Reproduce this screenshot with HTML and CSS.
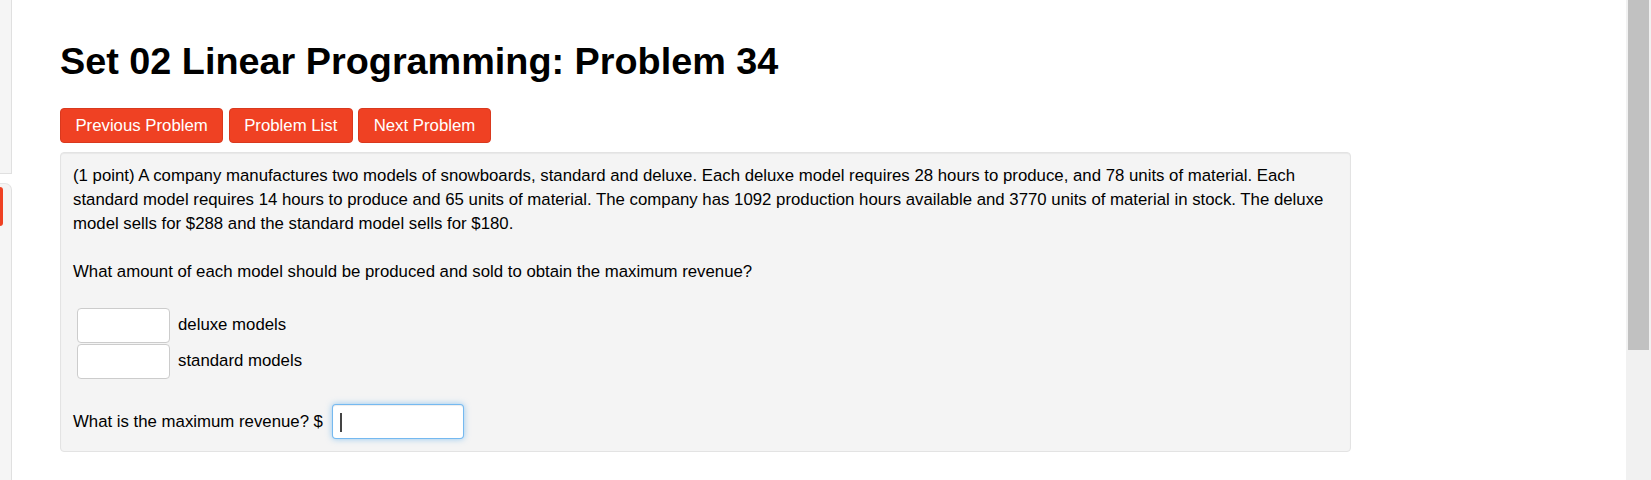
FILE: index.html
```html
<!DOCTYPE html>
<html lang="en">
<head>
    <meta charset="UTF-8">
    <meta name="viewport" content="width=device-width, initial-scale=1.0">
    <title>Set 02 Linear Programming: Problem 34</title>
    <link rel="stylesheet" href="styles.css">
</head>
<body>

    <div class="sidebar">
        <div class="side-panel"></div>
        <div class="side-panel lower">
            <span class="side-btn"></span>
        </div>
    </div>

    <div class="main">
        <h2 class="problem-title">Set 02 Linear Programming: Problem 34</h2>

        <div class="nav-buttons">
            <button class="nav-btn">Previous Problem</button>
            <button class="nav-btn">Problem List</button>
            <button class="nav-btn">Next Problem</button>
        </div>

        <div class="problem-box">
            <p class="statement">(1 point) A company manufactures two models of snowboards, standard and deluxe. Each deluxe model requires 28 hours to produce, and 78 units of material. Each standard model requires 14 hours to produce and 65 units of material. The company has 1092 production hours available and 3770 units of material in stock. The deluxe model sells for $288 and the standard model sells for $180.</p>

            <p class="question">What amount of each model should be produced and sold to obtain the maximum revenue?</p>

            <div class="answers">
                <div class="answer-row">
                    <input type="text" class="answer-input">
                    <span class="answer-label">deluxe models</span>
                </div>
                <div class="answer-row">
                    <input type="text" class="answer-input">
                    <span class="answer-label">standard models</span>
                </div>
            </div>

            <div class="revenue-row">
                <span>What is the maximum revenue? $</span>
                <span class="revenue-field">
                    <input type="text" class="answer-input revenue-input">
                    <span class="caret"></span>
                </span>
            </div>
        </div>
    </div>

    <!-- page scrollbar -->
    <div class="scrollbar"><div class="scroll-thumb"></div></div>

</body>
</html>
```

FILE: styles.css
```css
body {
    margin: 0;
    font-family: 'Liberation Sans', Arial, sans-serif;
    font-size: 16.8px;
    line-height: 24px;
    color: #000;
    background-color: #fff;
    display: flex;
    height: 480px;
    overflow: hidden;
}

.sidebar {
    width: 12px;
    flex-shrink: 0;
    display: flex;
    flex-direction: column;
}

.side-panel {
    height: 174px;
    box-sizing: border-box;
    background-color: #f5f5f5;
    border-right: 1px solid #e0e0e0;
    border-bottom: 1px solid #e0e0e0;
}

.side-panel.lower {
    margin-top: 9px;
    flex: 1;
    border-bottom: none;
    border-top: 1px solid #e6e6e6;
    border-top-right-radius: 7px;
    padding-top: 3px;
}

.side-btn {
    display: block;
    width: 3px;
    height: 39px;
    background-color: #ef4123;
    border-radius: 0 4px 4px 0;
}

.main {
    margin-left: 48px;
    padding-top: 37px;
}

.problem-title {
    margin: 0 0 23px 0;
    font-size: 37.8px;
    line-height: 48px;
    font-weight: bold;
    color: #000;
}

.nav-buttons {
    display: flex;
    gap: 5.5px;
    margin-bottom: 9px;
}

.nav-btn {
    height: 35px;
    padding: 0 14.4px;
    font-family: inherit;
    font-size: 16.8px;
    line-height: 24px;
    color: #fff;
    background-color: #ef4123;
    border: 1px solid #d9391e;
    border-radius: 4px;
    cursor: pointer;
}

.problem-box {
    width: 1291px;
    box-sizing: border-box;
    padding: 11px 12px 12px 12px;
    background-color: #f4f4f4;
    border: 1px solid #e3e3e3;
    border-radius: 4px;
    box-shadow: inset 0 1px 1px rgba(0, 0, 0, 0.05);
}

.statement,
.question {
    margin: 0;
}

.question {
    margin-top: 24px;
}

.answers {
    margin-top: 24px;
    margin-left: 4px;
}

.answer-row {
    display: flex;
    align-items: center;
    margin-bottom: 1px;
}

.answer-input {
    width: 93px;
    height: 35px;
    box-sizing: border-box;
    padding: 4px 7px;
    font-family: inherit;
    font-size: 16.8px;
    background-color: #fff;
    border: 1px solid #ccc;
    border-radius: 4px;
    outline: none;
}

.answer-label {
    margin-left: 8px;
    margin-top: -2px;
}

.revenue-row {
    display: flex;
    align-items: center;
    margin-top: 25px;
}

.revenue-field {
    position: relative;
    margin-left: 9px;
    display: flex;
}

.revenue-input {
    width: 132px;
    border-color: rgba(82, 168, 236, 0.8);
    box-shadow: inset 0 1px 1px rgba(0, 0, 0, 0.075), 0 0 6px rgba(82, 168, 236, 0.6);
}

.caret {
    position: absolute;
    left: 8px;
    top: 9px;
    width: 2px;
    height: 19px;
    background-color: #444;
}

.scrollbar {
    position: fixed;
    top: 0;
    right: 0;
    width: 25px;
    height: 100%;
    background-color: #f1f1f1;
}

.scroll-thumb {
    margin-left: 2px;
    width: 21px;
    height: 350px;
    background-color: #c1c1c1;
}
```
